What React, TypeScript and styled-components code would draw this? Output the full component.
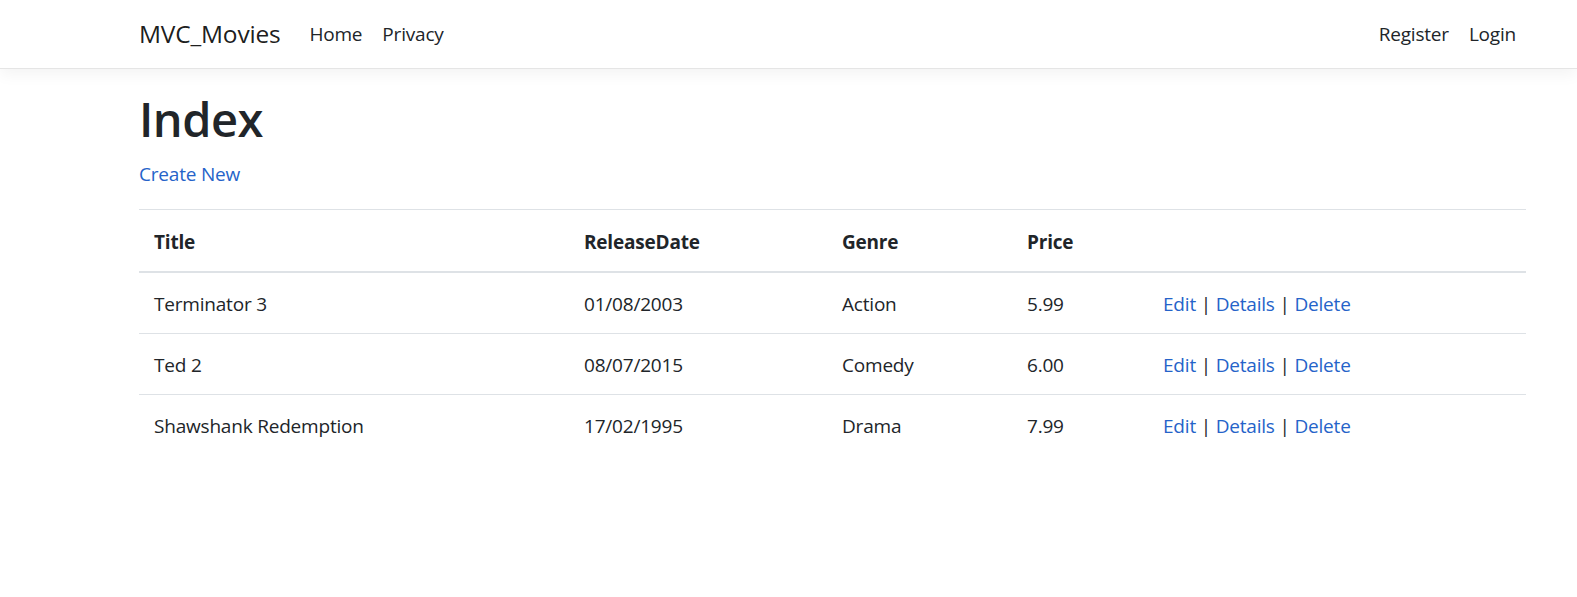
import styled, { createGlobalStyle } from "styled-components";

type Movie = {
  id: number;
  title: string;
  releaseDate: string;
  genre: string;
  price: string;
};

const movies: Movie[] = [
  { id: 1, title: "Terminator 3", releaseDate: "01/08/2003", genre: "Action", price: "5.99" },
  { id: 2, title: "Ted 2", releaseDate: "08/07/2015", genre: "Comedy", price: "6.00" },
  { id: 3, title: "Shawshank Redemption", releaseDate: "17/02/1995", genre: "Drama", price: "7.99" },
];

function App() {
  return (
    <>
      <GlobalStyle />
      <NavBar>
        <NavInner>
          <Brand href="#">MVC_Movies</Brand>
          <NavList>
            <NavLink href="#">Home</NavLink>
            <NavLink href="#">Privacy</NavLink>
          </NavList>
          <NavList $right>
            <NavLink href="#">Register</NavLink>
            <NavLink href="#">Login</NavLink>
          </NavList>
        </NavInner>
      </NavBar>
      <Main>
        <Heading>Index</Heading>
        <Para>
          <Anchor href="#">Create New</Anchor>
        </Para>
        <Table>
          <colgroup>
            <col style={{ width: 430 }} />
            <col style={{ width: 258 }} />
            <col style={{ width: 185 }} />
            <col style={{ width: 136 }} />
            <col />
          </colgroup>
          <thead>
            <tr>
              <Th>Title</Th>
              <Th>ReleaseDate</Th>
              <Th>Genre</Th>
              <Th>Price</Th>
              <Th></Th>
            </tr>
          </thead>
          <tbody>
            {movies.map((movie) => (
              <tr key={movie.id}>
                <Td>{movie.title}</Td>
                <Td>{movie.releaseDate}</Td>
                <Td>{movie.genre}</Td>
                <Td>{movie.price}</Td>
                <Td>
                  <Anchor href="#">Edit</Anchor> | <Anchor href="#">Details</Anchor> |{" "}
                  <Anchor href="#">Delete</Anchor>
                </Td>
              </tr>
            ))}
          </tbody>
        </Table>
      </Main>
    </>
  );
}

const GlobalStyle = createGlobalStyle`
  * { box-sizing: border-box; }
  body {
    margin: 0;
    background: #fff;
    color: #212529;
    font-family: "Open Sans", "Noto Sans", sans-serif;
    font-size: 19px;
    letter-spacing: -0.2px;
    line-height: 30px;
  }
`;

const NavBar = styled.nav`
  height: 69px;
  background: #fff;
  border-bottom: 1px solid #e5e5e5;
  box-shadow: 0 5px 15px rgba(0, 0, 0, 0.05);
`;

const NavInner = styled.div`
  height: 100%;
  width: 1387px;
  margin-left: 139px;
  display: flex;
  align-items: center;
`;

const Brand = styled.a`
  font-size: 24.5px;
  color: rgba(0, 0, 0, 0.9);
  text-decoration: none;
  margin-right: 19px;
  line-height: 36px;
`;

const NavList = styled.div<{ $right?: boolean }>`
  display: flex;
  margin-left: ${(p) => (p.$right ? "auto" : "0")};
`;

const NavLink = styled.a`
  color: #212529;
  text-decoration: none;
  padding: 0 10px;
`;

const Main = styled.main`
  width: 1387px;
  margin-left: 139px;
  padding-top: 20px;
`;

const Heading = styled.h1`
  margin: 0 0 10px;
  font-size: 47px;
  font-weight: 600;
  letter-spacing: -0.5px;
  line-height: 60px;
`;

const Para = styled.p`
  margin: 0 0 20px;
`;

const Anchor = styled.a`
  color: #2563c9;
  text-decoration: none;
`;

const Table = styled.table`
  width: 100%;
  border-collapse: collapse;
  table-layout: fixed;
`;

const Th = styled.th`
  text-align: left;
  font-weight: 700;
  padding: 17px 15px 14px;
  border-top: 1px solid #dee2e6;
  border-bottom: 2px solid #dee2e6;
`;

const Td = styled.td`
  padding: 16px 15px 14px;
  border-top: 1px solid #dee2e6;
  white-space: nowrap;
`;

export default App;
